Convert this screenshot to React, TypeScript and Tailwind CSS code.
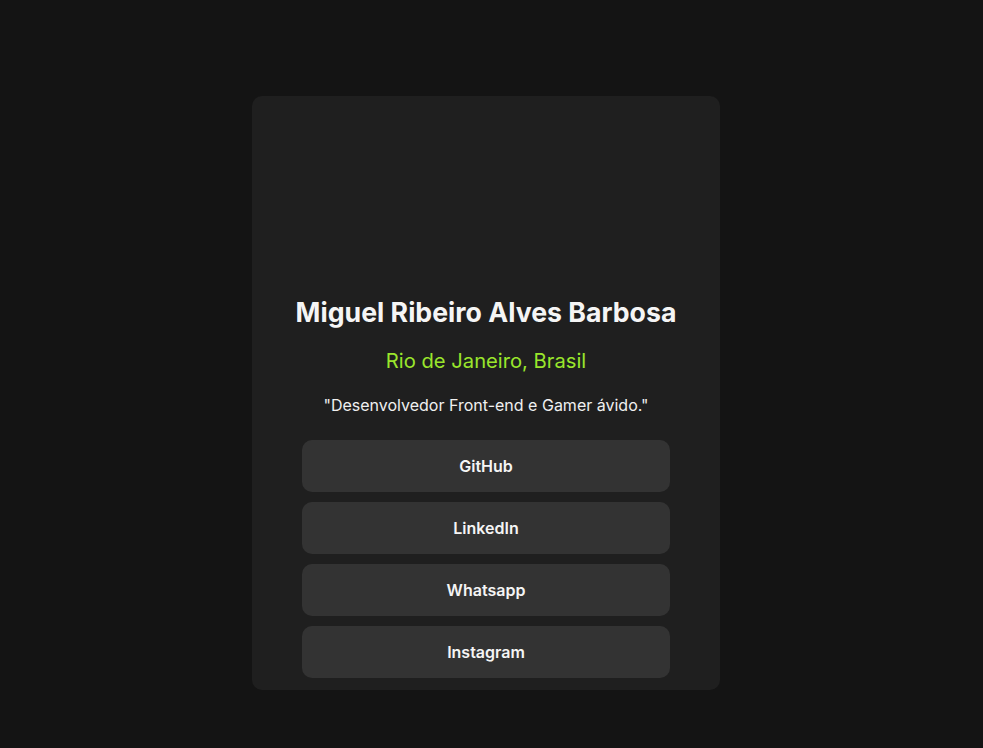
const links = ["GitHub", "LinkedIn", "Whatsapp", "Instagram"];

export default function App() {
  return (
    <div className="min-h-screen bg-[#141414] flex justify-center pt-[96px] font-['Inter',sans-serif]">
      <div className="mr-[11px] w-[468px] h-[594px] bg-[#1f1f1f] rounded-[10px] flex flex-col items-center px-[50px] pb-3">
        <div className="h-[200px] w-full" />
        <h1 className="whitespace-nowrap text-center text-[26.7px] leading-[32px] font-bold text-[#f5f5f5]">
          Miguel Ribeiro Alves Barbosa
        </h1>
        <p className="mt-[21px] text-[20.2px] leading-[24px] text-[#9ae62c]">
          Rio de Janeiro, Brasil
        </p>
        <p className="mt-[20px] text-[16px] leading-[24px] text-[#f0f0f0]">
          "Desenvolvedor Front-end e Gamer ávido."
        </p>
        <div className="mt-[23px] w-full flex flex-col gap-[10px]">
          {links.map((l) => (
            <a
              key={l}
              href="#"
              className="h-[52px] w-full rounded-[10px] bg-[#333333] flex items-center justify-center text-[16px] font-semibold text-[#f5f5f5]"
            >
              {l}
            </a>
          ))}
        </div>
      </div>
    </div>
  );
}
